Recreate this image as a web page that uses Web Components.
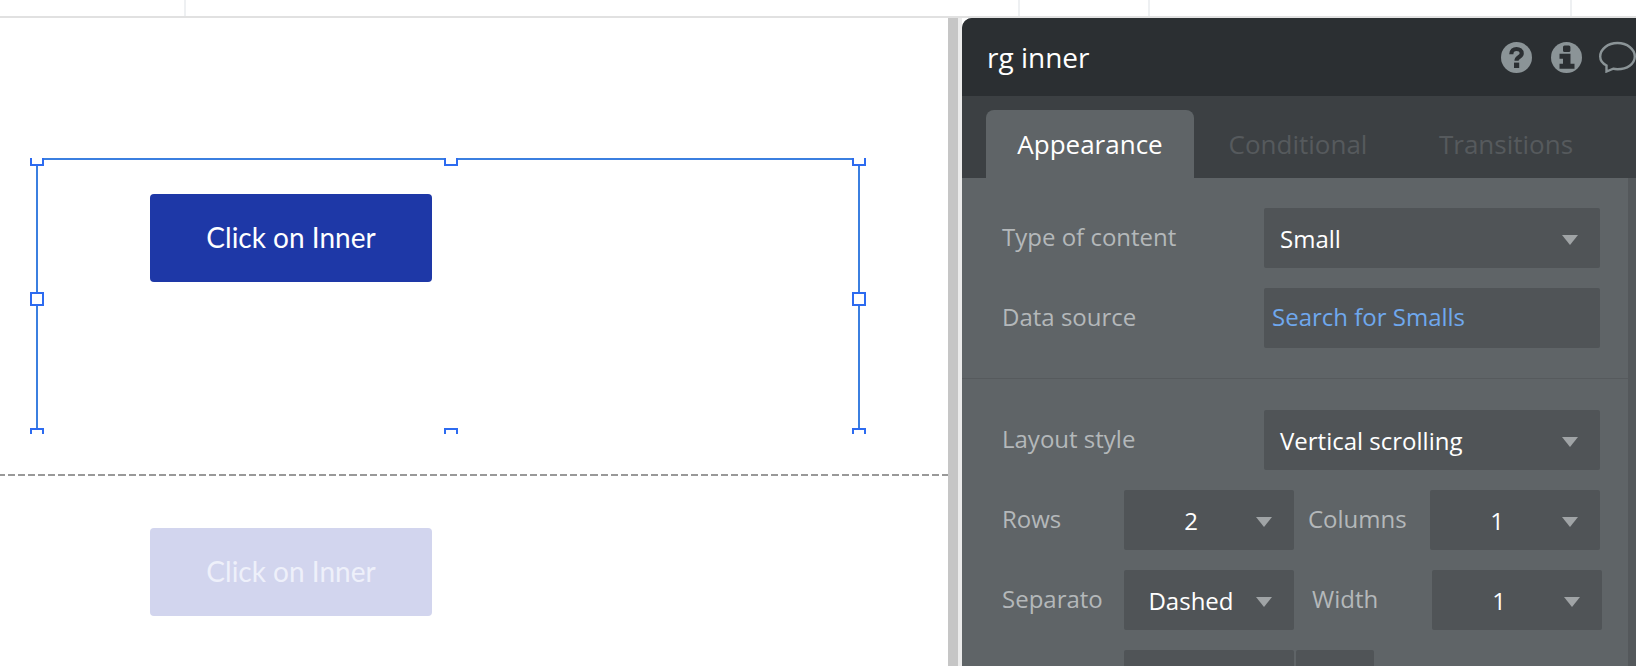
<!DOCTYPE html>
<html>
<head>
<meta charset="utf-8">
<title>rg inner</title>
<style>
  html, body { margin: 0; height: 100%; overflow: hidden; background: #fff; }
</style>
</head>
<body>
<bubble-editor>
  <canvas-area slot="canvas">
    <rg-cell label="Click on Inner"></rg-cell>
    <rg-cell label="Click on Inner" faded></rg-cell>
    <selection-frame></selection-frame>
  </canvas-area>
  <property-panel slot="panel" title="rg inner">
    <panel-section>
      <field-row label="Type of content"><field-select value="Small"></field-select></field-row>
      <field-row label="Data source"><field-select value="Search for Smalls" link></field-select></field-row>
    </panel-section>
    <panel-section>
      <field-row label="Layout style"><field-select value="Vertical scrolling"></field-select></field-row>
      <pair-row label="Rows" label2="Columns" value="2" value2="1" gap2="14" lw2="122"></pair-row>
      <pair-row label="Separato" label2="Width" value="Dashed" value2="1" gap2="18" lw2="120"></pair-row>
      <div style="display:flex;gap:2px;margin-left:122px;height:60px;">
        <div style="width:170px;background:#505457;border-radius:2px;"></div>
        <div style="width:78px;background:#505457;border-radius:2px;"></div>
      </div>
    </panel-section>
  </property-panel>
</bubble-editor>

<script>
class BubbleEditor extends HTMLElement {
  constructor(){
    super();
    this.attachShadow({mode: 'open'});
    this.shadowRoot.innerHTML = /* html */ `
    <style>
      :host { display: block; width: 1636px; height: 666px; overflow: hidden; }
      .ruler { display: flex; height: 16px; border-bottom: 2px solid #e1e1e1; box-sizing: content-box; }
      .ruler div { border-right: 2px solid #eef0f2; box-sizing: border-box; height: 16px; }
      .main { display: flex; height: 648px; }
      .gutter { width: 10px; background: #c6c6c6; }
      .edge { width: 4px; background: #ececec; }
    </style>
    <div class="ruler">
      <div style="width:186px"></div>
      <div style="width:834px"></div>
      <div style="width:130px"></div>
      <div style="width:422px"></div>
    </div>
    <div class="main">
      <slot name="canvas"></slot>
      <div class="gutter"></div>
      <div class="edge"></div>
      <slot name="panel"></slot>
    </div>
    `;
  }
}

class CanvasArea extends HTMLElement {
  constructor(){
    super();
    this.attachShadow({mode: 'open'});
    this.shadowRoot.innerHTML = /* html */ `
    <style>
      :host { display: block; position: relative; width: 948px; height: 648px; padding-top: 124px; box-sizing: border-box; overflow: hidden; background: #fff; }
    </style>
    <slot></slot>
    `;
  }
}

class RgCell extends HTMLElement {
  constructor(){
    super();
    this.attachShadow({mode: 'open'});
  }
  connectedCallback(){
    this.shadowRoot.innerHTML = /* html */ `
    <style>
      :host { display: block; padding: 52px 0 192px 150px; }
      :host([faded]) {
        padding-bottom: 0;
        border-top: 2px solid transparent;
        border-image: repeating-linear-gradient(90deg, #999 0 7px, transparent 7px 10px) 2;
      }
      button {
        display: block; width: 282px; height: 88px; padding: 0 0 2px; border: 0; border-radius: 4px;
        background: #1e38a7; color: #fff;
        font: 400 28px "Lato", sans-serif;
      }
      :host([faded]) button { background: #d2d5ee; color: #eef0fa; }
    </style>
    <button>${this.getAttribute('label')}</button>
    `;
  }
}

class SelectionFrame extends HTMLElement {
  constructor(){
    super();
    this.attachShadow({mode: 'open'});
    this.shadowRoot.innerHTML = /* html */ `
    <style>
      :host {
        position: absolute; left: 36px; top: 140px; width: 824px; height: 270px;
        box-sizing: border-box;
        border: 2px solid #3b7fe0; border-bottom: 0;
      }
      i { position: absolute; box-sizing: border-box; width: 14px; background: #fff; border: 2px solid #2d6bf0; }
      .top { top: -2px; height: 8px; border-top: 0; }
      .mid { top: 132px; height: 14px; }
      .bot { top: 268px; height: 6px; border-bottom: 0; }
      .l { left: -8px; }
      .c { left: 406px; }
      .r { right: -8px; }
    </style>
    <i class="top l"></i><i class="top c"></i><i class="top r"></i>
    <i class="mid l"></i><i class="mid r"></i>
    <i class="bot l"></i><i class="bot c"></i><i class="bot r"></i>
    `;
  }
}

class PropertyPanel extends HTMLElement {
  constructor(){
    super();
    this.attachShadow({mode: 'open'});
  }
  connectedCallback(){
    this.shadowRoot.innerHTML = /* html */ `
    <style>
      :host {
        display: block; width: 674px; height: 648px; overflow: hidden;
        border-radius: 10px 0 0 0; background: #5f6467;
        font-family: "Open Sans", sans-serif;
      }
      header {
        display: flex; align-items: center; height: 78px; padding-left: 25px;
        background: #2b2f32; color: #fff; font-size: 28px; position: relative;
      }
      h1 { font: inherit; margin: 0; flex: 1; }
      .icons { display: flex; align-items: center; gap: 19px; }
      .icons svg:nth-child(2) { margin-right: -2px; }
      svg { display: block; flex: none; }
      nav {
        display: flex; height: 82px; box-sizing: border-box; padding: 14px 0 0 24px;
        background: #3c4043; font-size: 26px; color: #565a5d;
      }
      nav div { display: flex; align-items: center; justify-content: center; width: 208px; height: 68px; }
      nav .on { background: #5f6467; color: #fff; border-radius: 8px 8px 0 0; }
      .body { display: flex; }
      .content { flex: 1; min-width: 0; }
      .bar { width: 8px; background: #54585b; }
    </style>
    <header>
      <h1>${this.getAttribute('title')}</h1>
      <div class="icons">
        <svg width="31" height="31" viewBox="0 0 31 31">
          <circle cx="15.5" cy="15.5" r="15.5" fill="#8b9497"/>
          <path d="M10.300 12.300c0-3.600 2.300-5.300 5.200-5.300s5.200 1.700 5.200 4.400c0 3.700-5.200 3.500-5.200 7.300" fill="none" stroke="#2b2f32" stroke-width="4.200"/>
          <rect x="13" y="20.600" width="5.200" height="5.400" fill="#2b2f32"/>
        </svg>
        <svg width="31" height="31" viewBox="0 0 31 31">
          <circle cx="15.5" cy="15.5" r="15.5" fill="#8b9497"/>
          <rect x="12" y="3.500" width="7.400" height="6.500" rx="1.500" fill="#2b2f32"/>
          <path d="M8.500 11.700h11v10h4v5h-15v-5h3.500v-5h-3.500z" fill="#2b2f32"/>
        </svg>
        <svg width="37" height="32" viewBox="0 0 37 32">
          <path d="M7.500 24.500C3.500 22.500 1.200 19.300 1.200 15.500 1.200 8 9 2 18.500 2s17.300 6 17.300 13.500S28 28.200 18.500 28.200c-1.500 0-3 -.1 -4.300 -.5L7.500 30.500z" fill="none" stroke="#8b9497" stroke-width="2.400"/>
        </svg>
      </div>
    </header>
    <nav>
      <div class="on">Appearance</div>
      <div>Conditional</div>
      <div>Transitions</div>
    </nav>
    <div class="body">
      <div class="content"><slot></slot></div>
      <div class="bar"></div>
    </div>
    `;
  }
}

class PanelSection extends HTMLElement {
  constructor(){
    super();
    this.attachShadow({mode: 'open'});
    this.shadowRoot.innerHTML = /* html */ `
    <style>
      :host {
        display: flex; flex-direction: column; gap: 20px; padding: 30px 0 30px 40px;
        border-bottom: 1px solid #565a5d;
      }
      :host(:last-child) { border-bottom: 0; padding-top: 31px; }
    </style>
    <slot></slot>
    `;
  }
}

class FieldRow extends HTMLElement {
  constructor(){
    super();
    this.attachShadow({mode: 'open'});
  }
  connectedCallback(){
    this.shadowRoot.innerHTML = /* html */ `
    <style>
      :host { display: grid; grid-template-columns: 262px 336px; align-items: center; height: 60px; }
      span { font-size: 24px; color: #b4b8ba; padding-bottom: 4px; }
    </style>
    <span>${this.getAttribute('label')}</span>
    <slot></slot>
    `;
  }
}

class PairRow extends HTMLElement {
  constructor(){
    super();
    this.attachShadow({mode: 'open'});
  }
  connectedCallback(){
    const a = n => this.getAttribute(n);
    const g = +a('gap2'), w = +a('lw2');
    this.shadowRoot.innerHTML = /* html */ `
    <style>
      :host { display: grid; grid-template-columns: 122px 170px ${g}px ${w}px 170px; align-items: center; height: 60px; }
      span { font-size: 24px; color: #b4b8ba; white-space: nowrap; overflow: hidden; padding-bottom: 4px; }
    </style>
    <span>${a('label')}</span>
    <field-select value="${a('value')}" center></field-select>
    <b></b>
    <span>${a('label2')}</span>
    <field-select value="${a('value2')}" center></field-select>
    `;
  }
}

class FieldSelect extends HTMLElement {
  constructor(){
    super();
    this.attachShadow({mode: 'open'});
  }
  connectedCallback(){
    const link = this.hasAttribute('link');
    this.shadowRoot.innerHTML = /* html */ `
    <style>
      :host {
        display: flex; align-items: center; height: 60px; box-sizing: border-box;
        padding: 1px 22px 0 16px; background: #505457; border-radius: 2px;
        font-size: 24px; color: #fff; white-space: nowrap;
      }
      :host([link]) { color: #6fa8ee; padding: 0 0 3px 8px; }
      :host([center]) { padding-left: 2px; }
      :host([center]) span { text-align: center; }
      span { flex: 1; }
      i { width: 0; height: 0; margin-top: 3px; border: 8px solid transparent; border-top: 10px solid #a0a4a6; border-bottom: 0; }
    </style>
    <span>${this.getAttribute('value')}</span>
    ${link ? '' : '<i></i>'}
    `;
  }
}

customElements.define('bubble-editor', BubbleEditor);
customElements.define('canvas-area', CanvasArea);
customElements.define('rg-cell', RgCell);
customElements.define('selection-frame', SelectionFrame);
customElements.define('property-panel', PropertyPanel);
customElements.define('panel-section', PanelSection);
customElements.define('field-row', FieldRow);
customElements.define('pair-row', PairRow);
customElements.define('field-select', FieldSelect);
</script>
</body>
</html>
